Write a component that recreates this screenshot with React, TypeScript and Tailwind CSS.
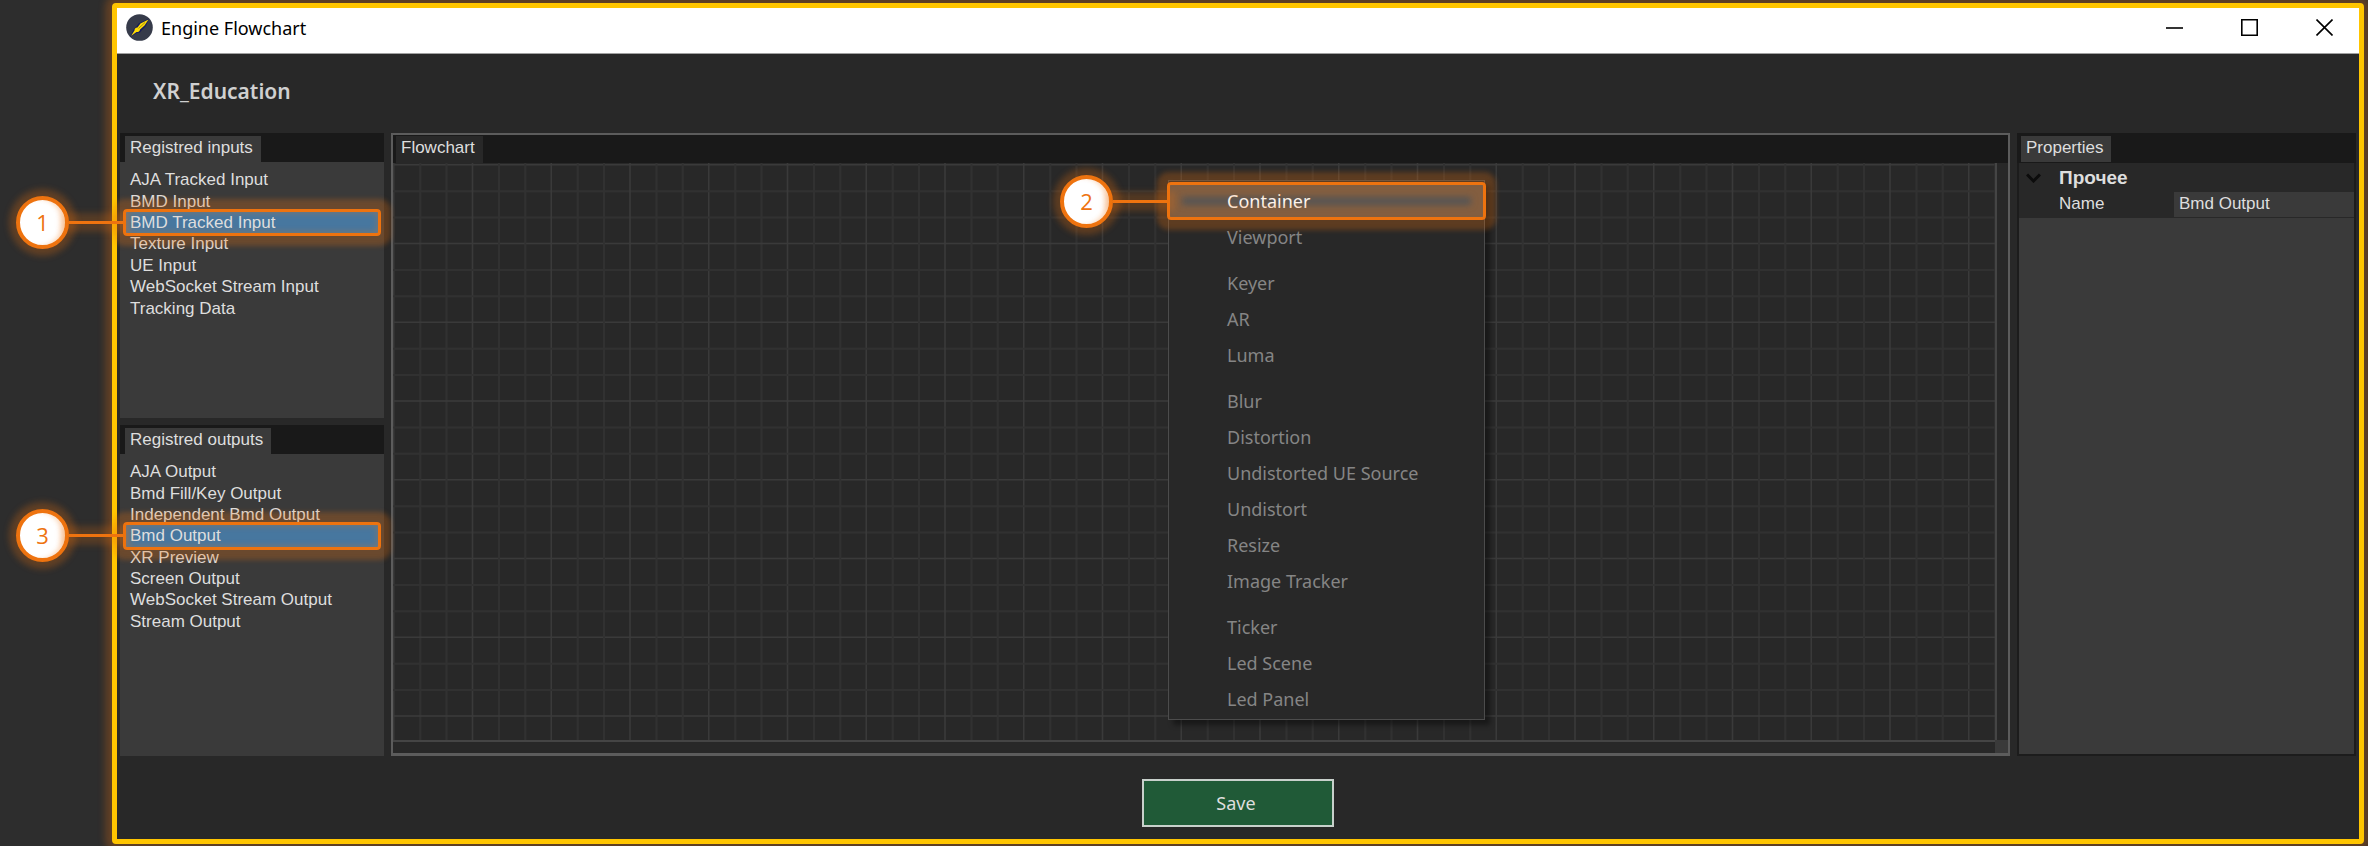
import { Fragment, useState } from "react";

const inputs = [
  "AJA Tracked Input",
  "BMD Input",
  "BMD Tracked Input",
  "Texture Input",
  "UE Input",
  "WebSocket Stream Input",
  "Tracking Data",
];

const outputs = [
  "AJA Output",
  "Bmd Fill/Key Output",
  "Independent Bmd Output",
  "Bmd Output",
  "XR Preview",
  "Screen Output",
  "WebSocket Stream Output",
  "Stream Output",
];

const menuGroups = [
  ["Container", "Viewport"],
  ["Keyer", "AR", "Luma"],
  ["Blur", "Distortion", "Undistorted UE Source", "Undistort", "Resize", "Image Tracker"],
  ["Ticker", "Led Scene", "Led Panel"],
];

const GRID_LINES = Array.from({ length: 12 }, (_, i) => ({
  at: (i * 105) / 4,
  major: i % 3 === 0,
}));

function Callout({ label, inner }: { label: string; inner?: boolean }) {
  return (
    <span
      className={
        inner
          ? "pointer-events-none absolute -inset-x-[2px] -inset-y-px z-20"
          : "pointer-events-none absolute -inset-x-[2px] -inset-y-[3px] z-20"
      }
    >
      <span
        className={
          inner
            ? "absolute inset-0 rounded-sm border-[3px] border-[#ee730f] shadow-[0_0_5px_10px_rgba(238,115,15,0.27),inset_0_0_6px_12px_rgba(238,115,15,0.3)]"
            : "absolute inset-0 rounded-sm border-[3px] border-[#ee730f] shadow-[0_0_5px_10px_rgba(238,115,15,0.27),inset_0_0_6px_1px_rgba(238,115,15,0.3)]"
        }
      />
      <span className="absolute inset-y-0 right-full flex items-center">
        <span className="flex size-[53px] shrink-0 items-center justify-center rounded-full border-4 border-[#ee730f] bg-white font-['Open_Sans',sans-serif] text-[22px] text-[#ee730f] shadow-[0_0_6px_7px_rgba(238,115,15,0.27),inset_-5px_0_5px_-2px_rgba(238,115,15,0.3)]">
          {label}
        </span>
        <span className="h-[3px] w-[54px] shrink-0 bg-[#ee730f] shadow-[0_0_6px_8px_rgba(238,115,15,0.22)]" />
      </span>
    </span>
  );
}

function ListPanel({
  title,
  items,
  initial,
  callout,
  listClass,
}: {
  title: string;
  items: string[];
  initial: string;
  callout: string;
  listClass: string;
}) {
  const [selected, setSelected] = useState(initial);
  return (
    <section className="flex flex-col bg-[#3a3a3a]">
      <header className="flex h-[29px] items-end bg-[#191919] pl-[5px]">
        <h2 className="h-[26px] bg-[#3a3a3a] pr-2 pl-[5px] text-[17px] leading-[24px]">{title}</h2>
      </header>
      <ul className={listClass}>
        {items.map((item) => (
          <li key={item} className="relative flex">
            <button
              type="button"
              onClick={() => setSelected(item)}
              className={
                item === selected
                  ? "flex flex-1 items-center bg-[#47779f] pl-[5px] text-left text-[17px] leading-none"
                  : "flex flex-1 items-center pl-[5px] text-left text-[17px] leading-none"
              }
            >
              {item}
            </button>
            {item === initial && <Callout label={callout} />}
          </li>
        ))}
      </ul>
    </section>
  );
}

function CompassLogo() {
  return (
    <svg viewBox="0 0 27 27" className="size-[27px]" aria-hidden="true">
      <circle cx="13.5" cy="13.5" r="13.3" fill="#363b4a" />
      <path d="M23 4.5 L20 12 L15.5 16.5 L14 18.5 L11 19 L4 23 L7.5 15.5 L10 13 L12.5 9.5 Z" fill="#171e58" />
      <path d="M22.5 5.5 L18.5 11.5 L14 15.5 A2.8 2.8 0 0 1 10.5 18 L5 22 L8.5 16.5 A2.8 2.8 0 0 1 11.5 13.5 L14.5 9.5 Z" fill="#ffdc00" />
      <path d="M12.5 14.5 L19 8.5" stroke="#8a7a20" strokeWidth="0.8" />
    </svg>
  );
}

function Grid() {
  return (
    <svg className="block size-full" aria-hidden="true">
      <defs>
        <pattern id="cells" x="0" y="1" width="315" height="315" patternUnits="userSpaceOnUse">
          {GRID_LINES.map(({ at, major }) => (
            <Fragment key={at}>
              <rect x={at} y="0" width={major ? 1.5 : 2} height="315" fill={major ? "#3a3a3a" : "#313131"} />
              <rect x="0" y={at} width="315" height={major ? 1.5 : 2} fill={major ? "#3a3a3a" : "#313131"} />
            </Fragment>
          ))}
        </pattern>
      </defs>
      <rect width="100%" height="100%" fill="url(#cells)" />
    </svg>
  );
}

function ContextMenu() {
  return (
    <div className="absolute top-[45px] left-[775px] z-10 w-[317px] border border-[#4c4c4c] bg-[#282828] py-[2px] font-['Noto_Sans',sans-serif] shadow-[5px_5px_5px_rgba(0,0,0,0.4)]">
      {menuGroups.map((group, index) => (
        <ul key={group[0]} className={index > 0 ? "mt-[10px]" : ""}>
          {group.map((item) => (
            <li key={item} className="relative">
              {item === "Container" ? (
                <>
                  <button type="button" className="block h-9 w-full bg-[#555555] pl-[58px] text-left text-lg text-white">
                    {item}
                  </button>
                  <Callout label="2" inner />
                </>
              ) : (
                <button type="button" className="block h-9 w-full pl-[58px] text-left text-lg text-[#858585]">
                  {item}
                </button>
              )}
            </li>
          ))}
        </ul>
      ))}
    </div>
  );
}

function TitleBar() {
  return (
    <header className="flex h-[46px] items-center border-b border-[#a0a0a0] bg-white pb-[6px] pl-[9px] font-['Noto_Sans',sans-serif] text-black">
      <CompassLogo />
      <h1 className="flex-1 pl-2 text-lg">Engine Flowchart</h1>
      <div className="flex gap-[5px]">
        <button type="button" aria-label="Minimize" className="flex h-9 w-[70px] items-center justify-center">
          <svg viewBox="0 0 17 17" className="size-[17px]" fill="none" stroke="currentColor" strokeWidth="1.6">
            <path d="M0 9H17" />
          </svg>
        </button>
        <button type="button" aria-label="Maximize" className="flex h-9 w-[70px] items-center justify-center">
          <svg viewBox="0 0 17 17" className="size-[17px]" fill="none" stroke="currentColor" strokeWidth="1.6">
            <path d="M.8 .8H16.2V16.2H.8Z" />
          </svg>
        </button>
        <button type="button" aria-label="Close" className="flex h-9 w-[70px] items-center justify-center">
          <svg viewBox="0 0 17 17" className="size-[17px]" fill="none" stroke="currentColor" strokeWidth="1.6">
            <path d="M.5 .5L16.5 16.5M16.5 .5L.5 16.5" />
          </svg>
        </button>
      </div>
    </header>
  );
}

function Properties() {
  const [open, setOpen] = useState(true);
  const [name, setName] = useState("Bmd Output");
  return (
    <section className="flex w-[339px] shrink-0 flex-col bg-[#3a3a3a]">
      <header className="flex h-[30px] items-start bg-[#191919] pt-[3px] pl-1">
        <h2 className="h-[26px] bg-[#3a3a3a] pr-2 pl-[5px] text-[17px] leading-[24px]">Properties</h2>
      </header>
      <div className="flex-1 border-x-2 border-b-2 border-[#1c1c1c]">
        <div className="bg-[#282828] pb-px">
          <button
            type="button"
            aria-expanded={open}
            onClick={() => setOpen(!open)}
            className="flex h-7 w-full items-center pt-[2px] pl-[7px] text-left text-[19px] font-bold"
          >
            <svg viewBox="0 0 15 10" className="h-[10px] w-[15px]" fill="none" stroke="#0c0c0c" strokeWidth="3">
              <path d="M1 1.5L7.5 8L14 1.5" />
            </svg>
            <span className="pl-[18px]">Прочее</span>
          </button>
          {open && (
            <div className="flex h-[26px] items-center">
              <label htmlFor="prop-name" className="w-[155px] pl-10 text-[17px]">
                Name
              </label>
              <input
                id="prop-name"
                value={name}
                onChange={(e) => setName(e.target.value)}
                className="h-[25px] min-w-0 flex-1 bg-[#3a3a3a] pl-[5px] text-[17px]"
              />
            </div>
          )}
        </div>
      </div>
    </section>
  );
}

export default function App() {
  return (
    <div className="flex min-h-screen flex-col overflow-hidden bg-[#2d2d2d] pt-[3px] pr-1 pb-[2px] pl-[112px] font-['Liberation_Sans',sans-serif] text-[#dedede]">
      <div className="flex flex-1 flex-col rounded-sm border-[5px] border-[#ffc500] bg-[#282828] shadow-[0_0_7px_7px_rgba(238,115,15,0.27)]">
        <TitleBar />
        <div className="flex h-[79px] items-center pb-[3px] pl-9 font-['Noto_Sans',sans-serif] text-[21px] font-semibold text-[#d0d0d0]">
          XR_Education
        </div>
        <main className="flex flex-1 gap-[7px] px-[3px]">
          <div className="grid w-[264px] shrink-0 grid-rows-[285fr_331fr] gap-[7px]">
            <ListPanel
              title="Registred inputs"
              items={inputs}
              initial="BMD Tracked Input"
              callout="1"
              listClass="mx-[5px] mt-[7px] grid h-[150px] auto-rows-fr"
            />
            <ListPanel
              title="Registred outputs"
              items={outputs}
              initial="Bmd Output"
              callout="3"
              listClass="mx-[5px] mt-[7px] grid h-[171px] auto-rows-fr"
            />
          </div>
          <section className="relative flex min-w-0 flex-1 flex-col border-2 border-b-[3px] border-[#5c5c5c]">
            <header className="flex h-7 bg-[#191919] pt-px pl-[3px]">
              <h2 className="bg-[#282828] pr-2 pl-[5px] text-[17px] leading-[24px]">Flowchart</h2>
            </header>
            <div className="grid min-h-0 flex-1 grid-cols-[1fr_13px] grid-rows-[1fr_13px]">
              <Grid />
              <div className="border-l-2 border-[#454545]" />
              <div className="border-t-2 border-[#454545]" />
              <div className="bg-[#3a3a3a]" />
            </div>
            <ContextMenu />
          </section>
          <Properties />
        </main>
        <footer className="flex h-[83px] shrink-0 items-start justify-center pt-[23px]">
          <button type="button" className="h-12 w-48 border-2 border-[#c8d0cb] bg-[#205a37] pr-1 font-['Noto_Sans',sans-serif] text-lg">
            Save
          </button>
        </footer>
      </div>
    </div>
  );
}
